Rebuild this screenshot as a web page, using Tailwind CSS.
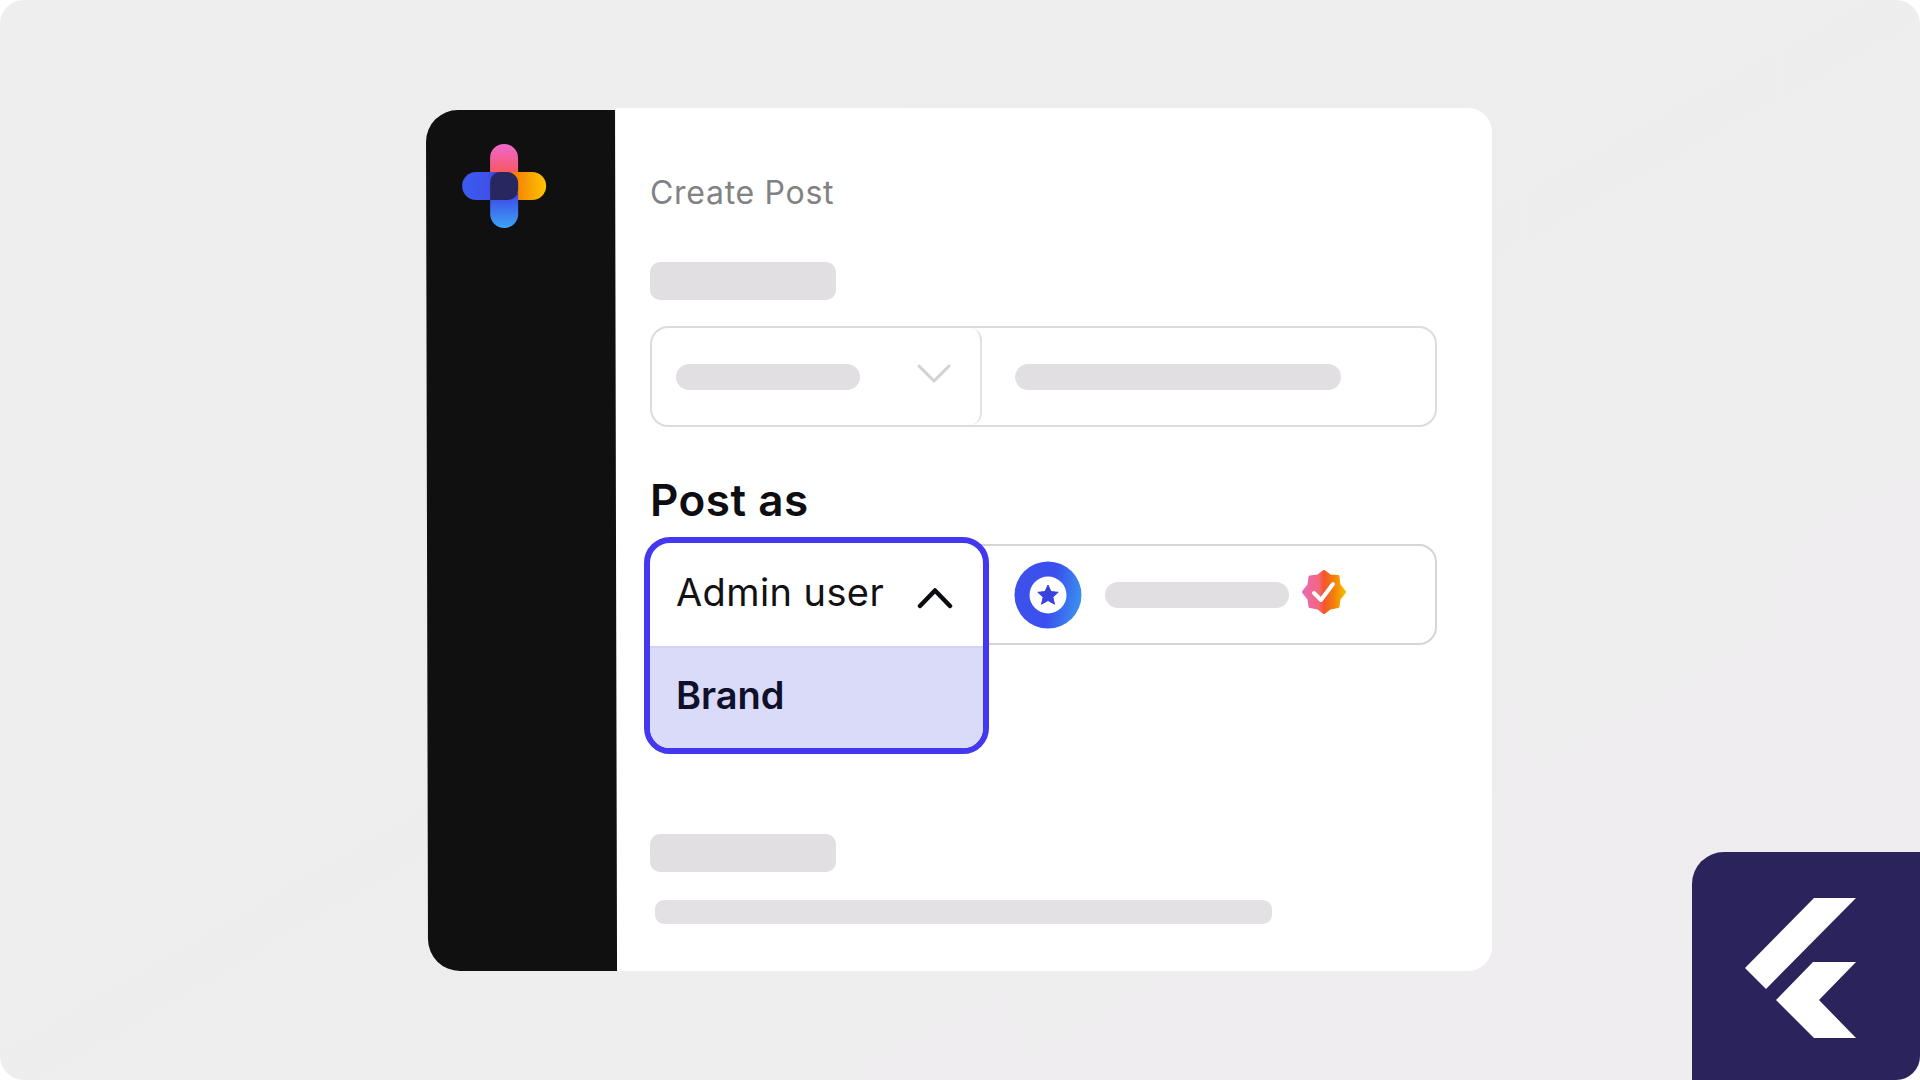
<!DOCTYPE html>
<html lang="en">
<head>
    <meta charset="UTF-8">
    <meta name="viewport" content="width=device-width, initial-scale=1.0">
    <title>Create Post</title>
    <script src="https://cdn.jsdelivr.net/npm/@tailwindcss/browser@4"></script>
</head>
<body class="bg-white font-['Inter',sans-serif] overflow-hidden">
    <div class="relative w-[1920px] h-[1080px] rounded-3xl overflow-hidden bg-linear-to-br from-[#eeeeee] to-[#efedef] pt-[108px] pl-[427px]">
        <!-- Card -->
        <main class="flex w-[1065px] h-[863px]">
            <!-- Sidebar -->
            <aside class="w-[189px] h-[861px] mt-[2px] shrink-0 bg-[#111011] rounded-l-[32px] skew-x-[0.14deg] pt-[33px] pl-[35px]">
                <svg class="w-[86px] h-[86px]" viewBox="0 0 86 86">
                    <defs>
                        <linearGradient id="pink" x1="0" y1="0" x2="0" y2="1">
                            <stop offset="0" stop-color="#ef68cf"/>
                            <stop offset="0.65" stop-color="#f65a75"/>
                            <stop offset="1" stop-color="#fb5c38"/>
                        </linearGradient>
                        <linearGradient id="amber" x1="0" y1="0" x2="1" y2="0">
                            <stop offset="0" stop-color="#f27a00"/>
                            <stop offset="1" stop-color="#ffc400"/>
                        </linearGradient>
                        <linearGradient id="blue" x1="0" y1="0" x2="1" y2="0">
                            <stop offset="0" stop-color="#3a5cf0"/>
                            <stop offset="0.6" stop-color="#3f50e8"/>
                            <stop offset="1" stop-color="#3538c4"/>
                        </linearGradient>
                        <linearGradient id="sky" x1="0" y1="0" x2="0" y2="1">
                            <stop offset="0" stop-color="#3b44e6"/>
                            <stop offset="1" stop-color="#3ea4f4"/>
                        </linearGradient>
                    </defs>
                    <path d="M29 29V15a14 14 0 0 1 28 0v22L50 30Z" fill="url(#pink)"/>
                    <path d="M50 29h21a14 14 0 0 1 0 28H52l5-18Z" fill="url(#amber)"/>
                    <path d="M29 50h28v21a14 14 0 0 1-28 0Z" fill="url(#sky)"/>
                    <path d="M15 29h31l-11 28H15a14 14 0 0 1 0-28Z" fill="url(#blue)"/>
                    <path d="M39 29h7a11 11 0 0 1 11 11v7a10 10 0 0 1-10 10H29V39a10 10 0 0 1 10-10Z" fill="#28275f"/>
                </svg>
            </aside>

            <section class="flex-1 bg-white rounded-r-3xl pl-[34px] pt-[65px]">
                <h2 class="text-[32px] leading-[40px] tracking-[0.7px] text-[#828282]">Create Post</h2>
                <div class="mt-[49px] w-[186px] h-[38px] rounded-[10px] bg-[#e1dfe2]"></div>

                <!-- First field -->
                <div class="mt-[26px] flex w-[787px] h-[101px] rounded-[18px] border-2 border-[#dddbdd]">
                    <div class="w-[330px] flex items-center justify-between border-r-2 border-[#e3e1e4] rounded-r-[12px] pl-[24px] pr-[28px]">
                        <div class="w-[184px] h-[26px] rounded-full bg-[#e1dfe2]"></div>
                        <svg class="w-[36px] h-[24px] -mt-[6px]" viewBox="0 0 36 24" fill="none" stroke="#d3d1d4" stroke-width="3" stroke-linecap="round" stroke-linejoin="round">
                            <path d="M3 4l15 15L33 4"/>
                        </svg>
                    </div>
                    <div class="flex-1 flex items-center pl-[33px]">
                        <div class="w-[326px] h-[26px] rounded-full bg-[#e1dfe2]"></div>
                    </div>
                </div>

                <h1 class="mt-[45px] text-[44px] leading-[56px] tracking-[0.5px] font-semibold text-[#0e0d12]">Post as</h1>

                <!-- Second field with open dropdown -->
                <div class="mt-[16px] relative flex w-[787px] h-[101px] rounded-[18px] border-2 border-[#d6d4d7]">
                    <div class="absolute -left-[8px] -top-[9px] w-[345px] h-[217px] rounded-[26px] border-6 border-[#4338f0] bg-white overflow-hidden">
                        <div class="h-[103px] flex items-center justify-between pl-[26px] pr-[30px] pb-[6px]">
                            <span class="text-[38px] leading-[48px] tracking-[0.4px] text-[#121114]">Admin user</span>
                            <svg class="w-[36px] h-[24px] mt-[12px]" viewBox="0 0 36 24" fill="none" stroke="#0b0b12" stroke-width="4.500" stroke-linecap="round" stroke-linejoin="round">
                                <path d="M3 20L18 4.500l15 15.500"/>
                            </svg>
                        </div>
                        <div class="h-[102px] flex items-center bg-[#dadaf9] border-t-2 border-[#d2d3ee] pl-[26px] pb-[7px]">
                            <span class="text-[38px] leading-[48px] font-semibold text-[#10102a]">Brand</span>
                        </div>
                    </div>
                    <div class="flex-1 flex items-center pl-[362px]">
                        <svg class="w-[68px] h-[68px] shrink-0" viewBox="0 0 68 68">
                            <defs>
                                <linearGradient id="ring" x1="0" y1="0.4" x2="1" y2="0.6">
                                    <stop offset="0" stop-color="#3d50ea"/>
                                    <stop offset="0.55" stop-color="#3a50ee"/>
                                    <stop offset="1" stop-color="#3b92ee"/>
                                </linearGradient>
                            </defs>
                            <circle cx="34" cy="34" r="33.500" fill="url(#ring)"/>
                            <circle cx="34" cy="34" r="18.500" fill="#fff"/>
                            <path d="M34 24l3 6.600 7.200.7-5.400 4.800 1.700 7.100-6.500-3.700-6.500 3.700 1.700-7.100-5.400-4.800 7.200-.7Z" fill="#3a42dc" stroke="#3a42dc" stroke-width="1" stroke-linejoin="round"/>
                        </svg>
                        <div class="ml-[23px] w-[184px] h-[26px] rounded-full bg-[#e1dfe2]"></div>
                        <svg class="w-[46px] h-[46px] ml-[12px] -mt-[5px]" viewBox="0 0 46 46">
                            <defs>
                                <linearGradient id="badge" x1="0" y1="0.5" x2="1" y2="0.5">
                                    <stop offset="0" stop-color="#e86ab4"/>
                                    <stop offset="0.38" stop-color="#f5657c"/>
                                    <stop offset="0.5" stop-color="#f5552a"/>
                                    <stop offset="0.75" stop-color="#f28208"/>
                                    <stop offset="1" stop-color="#f8b800"/>
                                </linearGradient>
                            </defs>
                            <path d="M23 2.500l6 4.500 8 .5 1 8.500 5.500 7-5.500 7-1 7.500-8 1.500-6 4.500-6-4.500-8-1.500-1-7.500-5.500-7 5.500-7 1-8 8-1Z" fill="url(#badge)" stroke="url(#badge)" stroke-width="3" stroke-linejoin="round"/>
                            <path d="M13 24l7 7L32 15" fill="none" stroke="#fff" stroke-width="4" stroke-linecap="round" stroke-linejoin="round"/>
                        </svg>
                    </div>
                </div>

                <div class="mt-[189px] w-[186px] h-[38px] rounded-[10px] bg-[#e1dfe2]"></div>
                <div class="mt-[28px] ml-[5px] w-[617px] h-[24px] rounded-[9px] bg-[#e3e1e4]"></div>
            </section>
        </main>

        <!-- Corner badge -->
        <div class="absolute right-0 bottom-0 w-[228px] h-[228px] rounded-tl-[32px] bg-[#2a235c]">
            <svg class="w-full h-full" viewBox="0 0 228 228" fill="#fff">
                <path d="M122 46h42L74 137l-21-21Z"/>
                <path d="M121 110h43l-37 38 37 38h-42l-38-38Z"/>
            </svg>
        </div>
    </div>
</body>
</html>
